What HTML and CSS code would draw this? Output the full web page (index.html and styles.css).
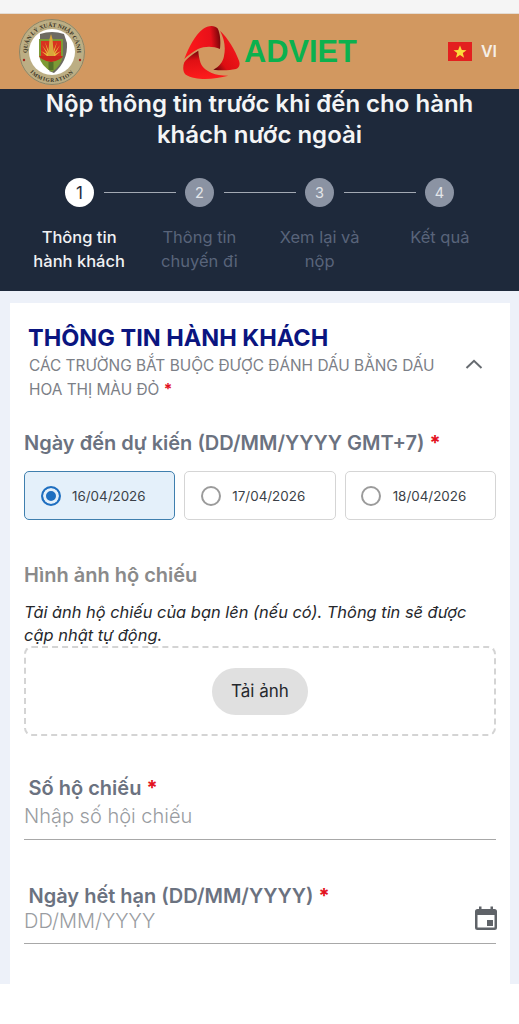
FILE: index.html
```html
<!DOCTYPE html>
<html lang="vi">
<head>
  <meta charset="UTF-8">
  <meta name="viewport" content="width=device-width, initial-scale=1.0">
  <title>Nộp thông tin trước khi đến</title>
  <link rel="stylesheet" href="styles.css">
</head>
<body>
  <div class="status-strip"></div>

  <header class="top-bar">
    <svg class="seal" viewBox="0 0 66 66" aria-hidden="true">
      <circle cx="33" cy="33" r="33" fill="#bcae84"/>
      <circle cx="33" cy="33" r="32.500" fill="none" stroke="#8f8464" stroke-width="1"/>
      <circle cx="33" cy="33" r="23" fill="#fff"/>
      <path d="M21 15 Q33 11 45 15 L48 24 Q49 42 35 54 L30 52 L42 38 L43 24 L21 21Z" fill="#6d6a62"/>
      <path d="M20 20 H44 V37 Q42 47 33 53 Q22 47 20 37Z" fill="#7d9a34"/>
      <path d="M22 22 H42 V37 H22Z" fill="#d8321f"/>
      <path d="M32 24 L33.500 34 L38 23 L35 34 L41 26 L36 35 L42 32 L36 37 H28 L22 32 L28 35 L23 26 L29 34 L26 23 L30.500 34Z" fill="#e8b83a"/>
      <path d="M30.500 20 L32 15 L33.500 20 L35 37 H29Z" fill="#d9a73a"/>
      <path d="M20 37 H44 Q42 41 32 43 Q22 41 20 37Z" fill="#c9281c"/>
      <path d="M29.500 43 H34.500 V51 H29.500Z" fill="#55702a"/>
      <defs>
        <path id="sealTop" d="M9.500 41.500 A25 25 0 1 1 56.500 41.500"/>
        <path id="sealBottom" d="M6 46 A30 30 0 0 0 60 46"/>
      </defs>
      <text class="seal-text"><textPath href="#sealTop" startOffset="50%" text-anchor="middle">QUẢN LÝ XUẤT NHẬP CẢNH</textPath></text>
      <text class="seal-text seal-text-wide"><textPath href="#sealBottom" startOffset="50%" text-anchor="middle">IMMIGRATION</textPath></text>
      <circle cx="5" cy="41" r="1.200" fill="#a3241c"/>
      <circle cx="61" cy="41" r="1.200" fill="#a3241c"/>
    </svg>

    <div class="brand">
      <svg class="brand-mark" viewBox="0 0 57 55" aria-hidden="true">
        <defs>
          <linearGradient id="bladeTop" x1="0" y1="0.6" x2="1" y2="0.5">
            <stop offset="0" stop-color="#ff1a1a"/>
            <stop offset="0.75" stop-color="#e8101a"/>
            <stop offset="1" stop-color="#7a060a"/>
          </linearGradient>
          <linearGradient id="bladeRight" x1="0.8" y1="0.2" x2="0.1" y2="1">
            <stop offset="0" stop-color="#f5181c"/>
            <stop offset="0.72" stop-color="#dc0e12"/>
            <stop offset="1" stop-color="#6a0508"/>
          </linearGradient>
          <linearGradient id="bladeBottom" x1="0.5" y1="1" x2="0.35" y2="0">
            <stop offset="0" stop-color="#ff1c1c"/>
            <stop offset="0.68" stop-color="#e01014"/>
            <stop offset="1" stop-color="#74060a"/>
          </linearGradient>
        </defs>
        <path d="M1.300 34 C6 22 12 10 20 4 C25 0 32 0 34.700 3.500 C37 8 38 16 37 24 C30 21 22 21 15 24 C10 27 5 30 1.300 34Z" fill="url(#bladeTop)"/>
        <path d="M37 5.700 C45 13 52 25 56 35.700 C57.500 40 56 43 53 44 C46 45.500 38 45.500 30.300 44.700 C36 42 40 37 41 31 C43 22 41 13 37 5.700Z" fill="url(#bladeRight)"/>
        <path d="M15.300 25.700 C10 29 4 33 1.300 37.300 C-0.500 42 0 47 2.500 49.500 C8 53 15 54 22 54 C30 54 38 52.500 45.300 50.700 C38 50.500 33 50 28.700 48 C22 45 18 41 17 36 C16 32 15.500 29 15.300 25.700Z" fill="url(#bladeBottom)"/>
      </svg>
      <span class="brand-name">ADVIET</span>
    </div>

    <div class="lang">
      <svg class="flag" viewBox="0 0 24 19" aria-hidden="true">
        <rect width="24" height="19" fill="#e3201f"/>
        <path d="M12 3.500 L13.800 8 L18.500 8.200 L14.800 11.100 L16.100 15.700 L12 13.100 L7.900 15.700 L9.200 11.100 L5.500 8.200 L10.200 8Z" fill="#fbdc3c"/>
      </svg>
      <span>VI</span>
    </div>
  </header>

  <section class="hero">
    <h1 class="hero-title">Nộp thông tin trước khi đến cho hành khách nước ngoài</h1>
    <div class="step-dots">
      <span class="dot dot-active">1</span>
      <span class="dot-line"></span>
      <span class="dot">2</span>
      <span class="dot-line"></span>
      <span class="dot">3</span>
      <span class="dot-line"></span>
      <span class="dot">4</span>
    </div>
    <div class="step-labels">
      <span class="step-label step-label-active">Thông tin hành khách</span>
      <span class="step-label">Thông tin chuyến đi</span>
      <span class="step-label">Xem lại và nộp</span>
      <span class="step-label">Kết quả</span>
    </div>
  </section>

  <main class="page">
    <div class="card">
      <div class="card-head">
        <h2 class="card-title">THÔNG TIN HÀNH KHÁCH</h2>
        <div class="card-note-row">
          <p class="card-note">CÁC TRƯỜNG BẮT BUỘC ĐƯỢC ĐÁNH DẤU BẰNG DẤU HOA THỊ MÀU ĐỎ <span class="req">*</span></p>
          <svg class="chevron" viewBox="0 0 18 10" aria-hidden="true">
            <path d="M1.500 9 L9 1.800 L16.500 9" fill="none" stroke="#666b70" stroke-width="2"/>
          </svg>
        </div>
      </div>

      <div class="field-label arrival-label">Ngày đến dự kiến (DD/MM/YYYY GMT+7) <span class="req">*</span></div>
      <div class="date-options">
        <label class="date-option date-option-on"><span class="radio radio-on"></span>16/04/2026</label>
        <label class="date-option"><span class="radio"></span>17/04/2026</label>
        <label class="date-option"><span class="radio"></span>18/04/2026</label>
      </div>

      <div class="field-label photo-label">Hình ảnh hộ chiếu</div>
      <p class="photo-hint">Tải ảnh hộ chiếu của bạn lên (nếu có). Thông tin sẽ được cập nhật tự động.</p>
      <div class="dropzone">
        <button class="upload-btn" type="button">Tải ảnh</button>
      </div>

      <div class="input-field passport-field">
        <div class="field-label input-label">Số hộ chiếu <span class="req">*</span></div>
        <div class="input-row"><span class="placeholder">Nhập số hội chiếu</span></div>
      </div>

      <div class="input-field expiry-field">
        <div class="field-label input-label">Ngày hết hạn (DD/MM/YYYY) <span class="req">*</span></div>
        <div class="input-row">
          <span class="placeholder">DD/MM/YYYY</span>
          <svg class="calendar" viewBox="0 0 22 24" aria-hidden="true">
            <path d="M4 0.500 H6.500 V3 H15.500 V0.500 H18 V3 H19.500 A2.500 2.500 0 0 1 22 5.500 V21.500 A2.500 2.500 0 0 1 19.500 24 H2.500 A2.500 2.500 0 0 1 0 21.500 V5.500 A2.500 2.500 0 0 1 2.500 3 H4Z M2.500 9 V21.500 H19.500 V9Z M12 14 H18 V20 H12Z" fill="#5f6368" fill-rule="evenodd"/>
          </svg>
        </div>
      </div>
    </div>
  </main>
</body>
</html>
```

FILE: styles.css
```css
* {
  box-sizing: border-box;
}

html, body {
  margin: 0;
  height: 1024px;
  background-color: #fff;
  overflow: hidden;
}

body {
  font-family: Inter, "Noto Sans", sans-serif;
  color: #1f2937;
}

.status-strip {
  height: 14px;
  background-color: #f5f5f5;
  border-bottom: 1px solid #e4dcd4;
}

/* header */
.top-bar {
  height: 75px;
  background-color: #d29860;
  display: flex;
  align-items: center;
  padding: 0 22px 0 19px;
}

.seal {
  width: 66px;
  height: 66px;
  flex-shrink: 0;
  margin-top: 1px;
}

.seal-text {
  font-family: "Liberation Serif", serif;
  font-size: 5.800px;
  font-weight: 700;
  fill: #3a3424;
}

.seal-text-wide {
  font-size: 5.500px;
  letter-spacing: 0.8px;
}

.brand {
  display: flex;
  align-items: center;
  margin-left: 98px;
  margin-top: 1px;
}

.brand-mark {
  width: 57px;
  height: 55px;
}

.brand-name {
  font-family: "Liberation Sans", Arial, sans-serif;
  font-size: 30.800px;
  font-weight: 700;
  color: #0bb14e;
  margin-left: 4px;
}

.lang {
  margin-left: auto;
  display: flex;
  align-items: center;
  gap: 9px;
  color: #f6efe6;
  font-size: 16px;
  font-weight: 600;
  margin-top: -1px;
}

.flag {
  width: 24px;
  height: 19px;
}

/* dark block with steps */
.hero {
  height: 202px;
  background-color: #1e293b;
  color: #fff;
}

.hero-title {
  margin: 0;
  padding: 0 30px;
  font-size: 24px;
  font-weight: 600;
  line-height: 30.500px;
  text-align: center;
  color: #f4f5f6;
}

.step-dots {
  display: flex;
  align-items: center;
  padding: 0 65px;
  margin-top: 28px;
}

.dot {
  width: 29px;
  height: 29px;
  border-radius: 50%;
  flex-shrink: 0;
  display: flex;
  align-items: center;
  justify-content: center;
  background-color: #8b93a3;
  color: #e3e6ea;
  font-size: 14.500px;
}

.dot-active {
  background-color: #fff;
  color: #1e293b;
  font-size: 17px;
}

.dot-line {
  flex: 1;
  height: 1px;
  margin: 0 9.500px;
  background-color: #a3a9b3;
}

.step-labels {
  display: grid;
  grid-template-columns: repeat(4, 1fr);
  padding: 0 19px;
  margin-top: 18px;
}

.step-label {
  padding: 0 12px;
  font-size: 16.500px;
  line-height: 24px;
  text-align: center;
  color: #59647a;
}

.step-label-active {
  color: #f1f2f4;
  font-weight: 500;
  padding: 0 8px;
}

/* form card */
.page {
  height: 693px;
  background-color: #edf1f9;
  padding: 12px 9px 0 10px;
}

.card {
  height: 100%;
  background-color: #fff;
  padding: 19px 14px 0;
}

.card-head {
  padding-left: 5px;
}

.card-title {
  margin: 0 0 0 -1px;
  font-size: 23.500px;
  font-weight: 700;
  line-height: 32px;
  color: #0a1580;
}

.card-note-row {
  display: flex;
  align-items: flex-start;
  justify-content: space-between;
}

.card-note {
  margin: 0;
  width: 424px;
  font-size: 15.400px;
  line-height: 24px;
  color: #7c8087;
}

.req {
  color: #e3121e;
  font-weight: 700;
}

.chevron {
  width: 18px;
  height: 10px;
  margin: 5px 13px 0 0;
}

.field-label {
  font-size: 20px;
  font-weight: 600;
  line-height: 24px;
  color: #6b7280;
}

.arrival-label {
  margin-top: 29px;
}

.date-options {
  display: grid;
  grid-template-columns: repeat(3, 1fr);
  gap: 9px;
  margin-top: 16px;
}

.date-option {
  height: 49px;
  display: flex;
  align-items: center;
  gap: 11.500px;
  padding-left: 15.500px;
  border: 1.500px solid #d5d5d5;
  border-radius: 5px;
  font-size: 13.400px;
  color: #3a3f47;
}

.date-option-on {
  background-color: #e4f0fa;
  border-color: #3f7fae;
}

.radio {
  width: 20px;
  height: 20px;
  border: 2px solid #9b9b9b;
  border-radius: 50%;
  flex-shrink: 0;
}

.radio-on {
  border-color: #1f6fc0;
  background-color: #1f6fc0;
  box-shadow: inset 0 0 0 3px #e4f0fa;
}

.photo-label {
  margin-top: 43px;
  color: #8a8a8a;
}

.photo-hint {
  margin: 14px 0 -1px;
  font-size: 16.400px;
  font-style: italic;
  line-height: 23px;
  color: #26282c;
}

.dropzone {
  height: 90px;
  display: flex;
  align-items: center;
  justify-content: center;
  border: 2px dashed #d4d4d4;
  border-radius: 8px;
}

.upload-btn {
  width: 96px;
  height: 47px;
  border: none;
  border-radius: 24px;
  background-color: #e0e0e0;
  font-family: inherit;
  font-size: 17px;
  font-weight: 400;
  color: #25282d;
}

.input-field {
  border-bottom: 1.500px solid #a8a8a8;
}

.passport-field {
  margin-top: 40px;
}

.expiry-field {
  margin-top: 44px;
}

.input-label {
  padding-left: 4.500px;
}

.input-row {
  display: flex;
  align-items: center;
  justify-content: space-between;
  height: 39px;
  padding-bottom: 8px;
}

.expiry-field .input-row {
  height: 35px;
  padding-bottom: 10px;
}

.placeholder {
  font-size: 20px;
  font-weight: 300;
  color: #999ca1;
}

.calendar {
  width: 22px;
  height: 24px;
  margin: 0 -1px 6px 0;
}
```
